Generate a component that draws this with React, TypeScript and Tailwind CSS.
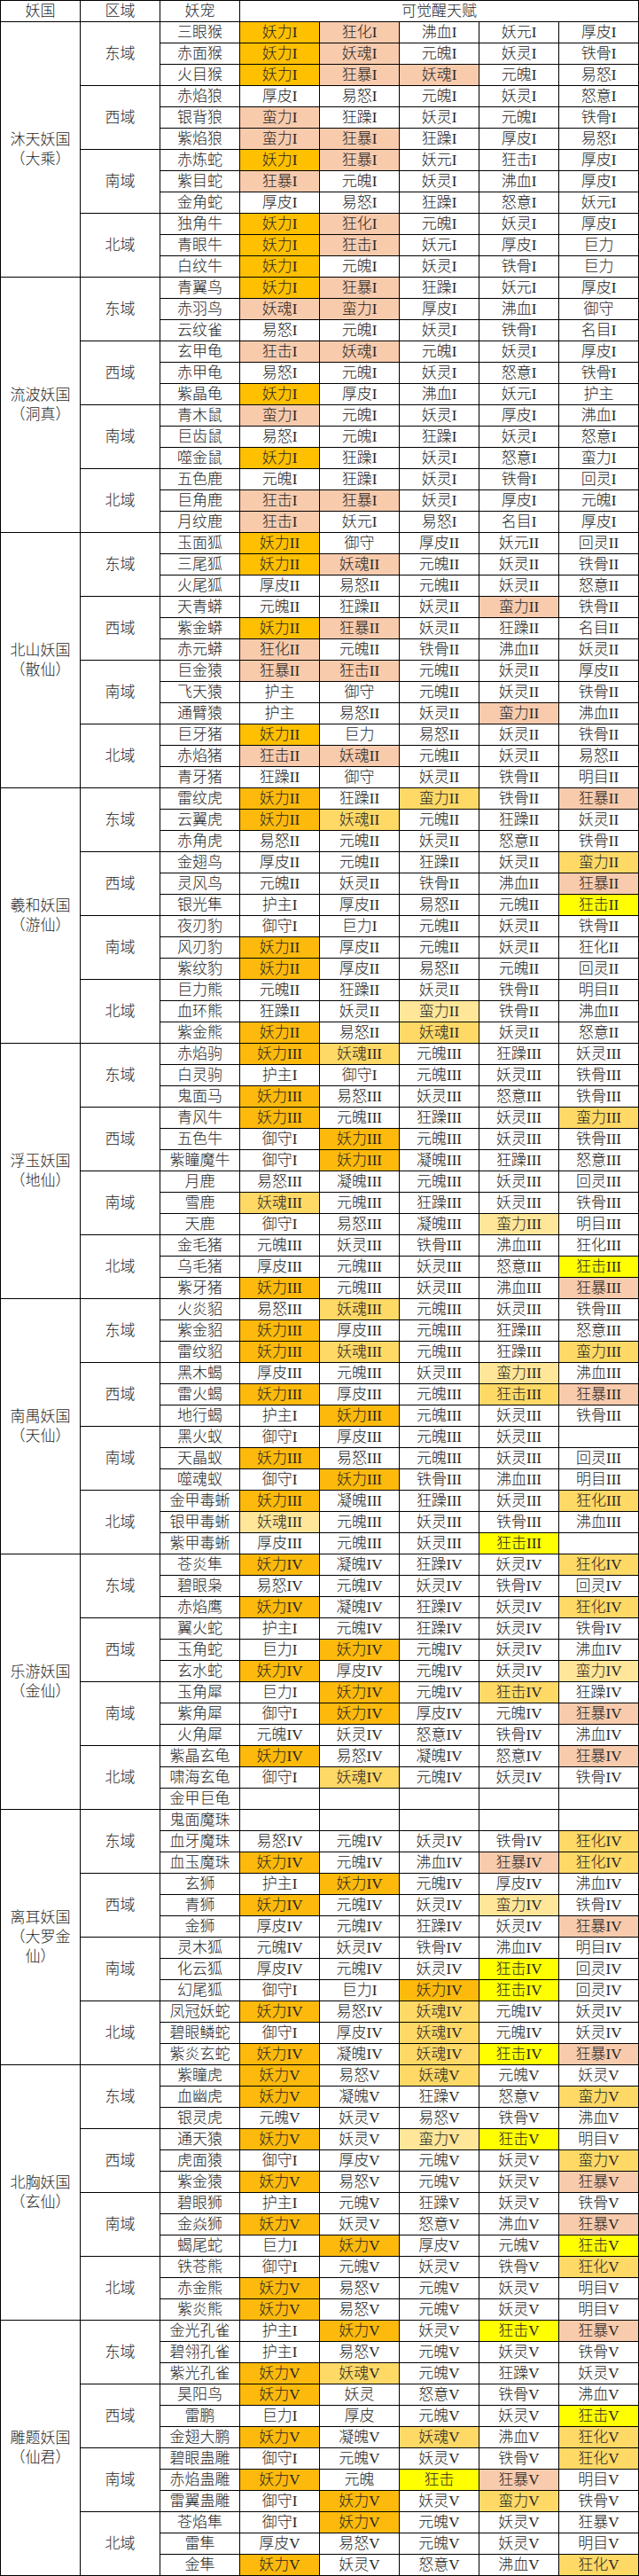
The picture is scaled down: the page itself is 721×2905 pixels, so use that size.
type Region = { name: string; pets: string[] };
type Country = { name: string[]; regions: Region[] };

// 单元格写法: "文字@色号"，"_" 为空格子
const fills: Record<string, string> = {
  g: 'bg-[#FFC000]',
  o: 'bg-[#FDBA0C]',
  l: 'bg-[#FFD966]',
  e: 'bg-[#FFE699]',
  p: 'bg-[#F8CBAD]',
  y: 'bg-[#FFFF00]',
};

const countries: Country[] = [
  {
    name: ['沐天妖国', '（大乘）'],
    regions: [
      { name: '东域', pets: ['三眼猴 妖力I@g 狂化I@p 沸血I 妖元I 厚皮I', '赤面猴 妖力I@g 妖魂I@p 元魄I 妖灵I 铁骨I', '火目猴 妖力I@g 狂暴I@p 妖魂I@p 元魄I 易怒I'] },
      { name: '西域', pets: ['赤焰狼 厚皮I 易怒I 元魄I 妖灵I 怒意I', '银背狼 蛮力I@p 狂躁I 妖灵I 元魄I 铁骨I', '紫焰狼 蛮力I@p 狂暴I@p 狂躁I 厚皮I 易怒I'] },
      { name: '南域', pets: ['赤炼蛇 妖力I@g 狂暴I@p 妖元I 狂击I 厚皮I', '紫目蛇 狂暴I@p 元魄I 妖灵I 沸血I 厚皮I', '金角蛇 厚皮I 易怒I 狂躁I 怒意I 妖元I'] },
      { name: '北域', pets: ['独角牛 妖力I@g 狂化I@p 元魄I 妖灵I 厚皮I', '青眼牛 妖力I@g 狂击I@p 妖元I 厚皮I 巨力', '白纹牛 妖力I@g 元魄I 妖灵I 铁骨I 巨力'] },
    ],
  },
  {
    name: ['流波妖国', '（洞真）'],
    regions: [
      { name: '东域', pets: ['青翼鸟 妖力I@g 狂暴I@p 狂躁I 妖元I 厚皮I', '赤羽鸟 妖魂I@p 蛮力I@p 厚皮I 沸血I 御守', '云纹雀 易怒I 元魄I 妖灵I 铁骨I 名目I'] },
      { name: '西域', pets: ['玄甲龟 狂击I@p 妖魂I@p 元魄I 妖灵I 厚皮I', '赤甲龟 易怒I 元魄I 妖灵I 怒意I 铁骨I', '紫晶龟 妖力I@g 厚皮I 沸血I 妖元I 护主'] },
      { name: '南域', pets: ['青木鼠 蛮力I@p 元魄I 妖灵I 厚皮I 沸血I', '巨齿鼠 易怒I 元魄I 狂躁I 妖灵I 怒意I', '噬金鼠 妖力I@g 狂躁I 妖灵I 怒意I 蛮力I'] },
      { name: '北域', pets: ['五色鹿 元魄I 狂躁I 妖灵I 铁骨I 回灵I', '巨角鹿 狂击I@p 狂暴I@p 妖灵I 厚皮I 元魄I', '月纹鹿 狂击I@p 妖元I 易怒I 名目I 厚皮I'] },
    ],
  },
  {
    name: ['北山妖国', '（散仙）'],
    regions: [
      { name: '东域', pets: ['玉面狐 妖力II@g 御守 厚皮II 妖元II 回灵II', '三尾狐 妖力II@g 妖魂II@p 元魄II 妖灵II 铁骨II', '火尾狐 厚皮II 易怒II 元魄II 妖灵II 怒意II'] },
      { name: '西域', pets: ['天青蟒 元魄II 狂躁II 妖灵II 蛮力II@p 铁骨II', '紫金蟒 妖力II@g 狂暴II@p 妖灵II 狂躁II 名目II', '赤元蟒 狂化II@p 元魄II 铁骨II 沸血II 妖灵II'] },
      { name: '南域', pets: ['巨金猿 狂暴II@p 狂击II@p 元魄II 妖灵II 厚皮II', '飞天猿 护主 御守 元魄II 妖灵II 铁骨II', '通臂猿 护主 易怒II 妖灵II 蛮力II@p 沸血II'] },
      { name: '北域', pets: ['巨牙猪 妖力II@g 巨力 易怒II 妖灵II 铁骨II', '赤焰猪 狂击II@p 妖魂II@p 元魄II 妖灵II 易怒II', '青牙猪 狂躁II 御守 妖灵II 铁骨II 明目II'] },
    ],
  },
  {
    name: ['羲和妖国', '（游仙）'],
    regions: [
      { name: '东域', pets: ['雷纹虎 妖力II@o 狂躁II 蛮力II@l 铁骨II 狂暴II@p', '云翼虎 妖力II@o 妖魂II@l 元魄II 狂躁II 妖灵II', '赤角虎 易怒II 元魄II 妖灵II 怒意II 铁骨II'] },
      { name: '西域', pets: ['金翅鸟 厚皮II 元魄II 狂躁II 妖灵II 蛮力II@l', '灵风鸟 元魄II 妖灵II 铁骨II 沸血II 狂暴II@p', '银光隼 护主I 厚皮II 易怒II 元魄II 狂击II@y'] },
      { name: '南域', pets: ['夜刃豹 御守I 巨力I 元魄II 妖灵II 铁骨II', '风刃豹 妖力II@o 厚皮II 元魄II 妖灵II 狂化II', '紫纹豹 妖力II@o 厚皮II 易怒II 元魄II 回灵II'] },
      { name: '北域', pets: ['巨力熊 元魄II 狂躁II 妖灵II 铁骨II 明目II', '血环熊 狂躁II 妖灵II 蛮力II@e 铁骨II 沸血II', '紫金熊 妖力II@o 易怒II 妖魂II@l 妖灵II 怒意II'] },
    ],
  },
  {
    name: ['浮玉妖国', '（地仙）'],
    regions: [
      { name: '东域', pets: ['赤焰驹 妖力III@o 妖魂III@l 元魄III 狂躁III 妖灵III', '白灵驹 护主I 御守I 元魄III 妖灵III 铁骨III', '鬼面马 妖力III@o 易怒III 妖灵III 怒意III 铁骨III'] },
      { name: '西域', pets: ['青风牛 妖力III@o 元魄III 狂躁III 妖灵III 蛮力III@l', '五色牛 御守I 妖力III@o 元魄III 妖灵III 铁骨III', '紫瞳魔牛 御守I 妖力III@o 凝魄III 狂躁III 怒意III'] },
      { name: '南域', pets: ['月鹿 易怒III 凝魄III 元魄III 妖灵III 回灵III', '雪鹿 妖魂III@l 元魄III 狂躁III 妖灵III 铁骨III', '天鹿 御守I 易怒III 凝魄III 蛮力III@e 明目III'] },
      { name: '北域', pets: ['金毛猪 元魄III 妖灵III 铁骨III 沸血III 狂化III', '乌毛猪 厚皮III 元魄III 妖灵III 怒意III 狂击III@y', '紫牙猪 妖力III@o 元魄III 妖灵III 沸血III 狂暴III@p'] },
    ],
  },
  {
    name: ['南禺妖国', '（天仙）'],
    regions: [
      { name: '东域', pets: ['火炎貂 易怒III 妖魂III@l 元魄III 妖灵III 铁骨III', '紫金貂 妖力III@o 厚皮III 元魄III 狂躁III 怒意III', '雷纹貂 妖力III@o 妖魂III@l 元魄III 狂躁III 蛮力III@l'] },
      { name: '西域', pets: ['黑木蝎 厚皮III 元魄III 妖灵III 蛮力III@e 沸血III', '雷火蝎 妖力III@o 厚皮III 元魄III 狂击III@l 狂暴III@p', '地行蝎 护主I 妖力III@o 元魄III 妖灵III 铁骨III'] },
      { name: '南域', pets: ['黑火蚁 御守I 厚皮III 元魄III 妖灵III _', '天晶蚁 妖力III@o 易怒III 元魄III 妖灵III 回灵III', '噬魂蚁 御守I 妖力III@o 铁骨III 沸血III 明目III'] },
      { name: '北域', pets: ['金甲毒蜥 妖力III@o 凝魄III 狂躁III 妖灵III 狂化III@l', '银甲毒蜥 妖魂III@e 元魄III 妖灵III 铁骨III 沸血III', '紫甲毒蜥 厚皮III 元魄III 妖灵III 狂击III@y _'] },
    ],
  },
  {
    name: ['乐游妖国', '（金仙）'],
    regions: [
      { name: '东域', pets: ['苍炎隼 妖力IV@o 凝魄IV 狂躁IV 妖灵IV 狂化IV@l', '碧眼枭 易怒IV 元魄IV 妖灵IV 铁骨IV 回灵IV', '赤焰鹰 妖力IV@o 凝魄IV 狂躁IV 妖灵IV 狂化IV@l'] },
      { name: '西域', pets: ['翼火蛇 护主I 元魄IV 狂躁IV 妖灵IV 铁骨IV', '玉角蛇 巨力I 妖力IV@o 元魄IV 妖灵IV 沸血IV', '玄水蛇 妖力IV@o 厚皮IV 元魄IV 妖灵IV 蛮力IV@e'] },
      { name: '南域', pets: ['玉角犀 巨力I 妖力IV@o 元魄IV 狂击IV@l 狂躁IV', '紫角犀 御守I 妖力IV@o 厚皮IV 元魄IV 狂暴IV@p', '火角犀 元魄IV 妖灵IV 怒意IV 铁骨IV 沸血IV'] },
      { name: '北域', pets: ['紫晶玄龟 妖力IV@o 易怒IV 凝魄IV 怒意IV 狂暴IV@p', '啸海玄龟 御守I 妖魂IV@l 元魄IV 妖灵IV 铁骨IV', '金甲巨龟 _ _ _ _ _'] },
    ],
  },
  {
    name: ['离耳妖国', '（大罗金', '仙）'],
    regions: [
      { name: '东域', pets: ['鬼面魔珠 _ _ _ _ _', '血牙魔珠 易怒IV 元魄IV 妖灵IV 铁骨IV 狂化IV@l', '血玉魔珠 妖力IV@o 元魄IV 沸血IV 狂暴IV@p 狂化IV@l'] },
      { name: '西域', pets: ['玄狮 护主I 妖力IV@o 元魄IV 厚皮IV 沸血IV', '青狮 妖力IV@o 元魄IV 妖灵IV 蛮力IV@e 铁骨IV', '金狮 厚皮IV 元魄IV 狂躁IV 妖灵IV 狂暴IV@p'] },
      { name: '南域', pets: ['灵木狐 元魄IV 妖灵IV 铁骨IV 沸血IV 明目IV', '化云狐 厚皮IV 元魄IV 妖灵IV 狂击IV@y 回灵IV', '幻尾狐 御守I 巨力I 妖力IV@o 狂击IV@y 回灵IV'] },
      { name: '北域', pets: ['凤冠妖蛇 妖力IV@o 易怒IV 妖魂IV@l 元魄IV 妖灵IV', '碧眼鳞蛇 御守I 厚皮IV 妖魂IV@l 元魄IV 妖灵IV', '紫炎玄蛇 妖力IV@o 凝魄IV 妖魂IV@l 狂击IV@y 狂暴IV@p'] },
    ],
  },
  {
    name: ['北胸妖国', '（玄仙）'],
    regions: [
      { name: '东域', pets: ['紫瞳虎 妖力V@o 易怒V 妖魂V@l 元魄V 妖灵V', '血幽虎 妖力V@o 凝魄V 狂躁V 怒意V 蛮力V@l', '银灵虎 元魄V 妖灵V 易怒V 铁骨V 沸血V'] },
      { name: '西域', pets: ['通天猿 妖力V@o 妖灵V 蛮力V@e 狂击V@y 明目V', '虎面猿 御守I 厚皮V 元魄V 妖灵V 蛮力V@l', '紫金猿 妖力V@o 易怒V 元魄V 妖灵V 狂暴V@p'] },
      { name: '南域', pets: ['碧眼狮 护主I 元魄V 狂躁V 妖灵V 铁骨V', '金焱狮 妖力V@o 妖灵V 怒意V 沸血V 狂暴V@p', '蝎尾蛇 巨力I 妖力V@o 厚皮V 元魄V 狂击V@y'] },
      { name: '北域', pets: ['铁苍熊 御守I 元魄V 妖灵V 铁骨V 狂化V@l', '赤金熊 妖力V@o 易怒V 元魄V 妖灵V 明目V', '紫炎熊 妖力V@o 易怒V 元魄V 妖灵V 明目V'] },
    ],
  },
  {
    name: ['雕题妖国', '（仙君）'],
    regions: [
      { name: '东域', pets: ['金光孔雀 护主I 妖力V@o 妖灵V 狂击V@y 狂暴V@p', '碧翎孔雀 护主I 易怒V 元魄V 妖灵V 铁骨V', '紫光孔雀 妖力V@o 妖魂V@l 元魄V 狂躁V 妖灵V'] },
      { name: '西域', pets: ['昊阳鸟 妖力V@o 妖灵 怒意V 铁骨V 沸血V', '雷鹏 巨力I 厚皮 元魄V 妖灵V 狂击V@y', '金翅大鹏 妖力V@o 凝魄V 妖魂V@l 沸血V 狂化V@l'] },
      { name: '南域', pets: ['碧眼蛊雕 御守I 元魄V 妖灵V 铁骨V 狂化V@l', '赤焰蛊雕 妖力V@o 元魄 狂击@y 狂暴V@p 明目V', '雷翼蛊雕 御守I 妖力V@o 妖灵V 蛮力V@l 铁骨V'] },
      { name: '北域', pets: ['苍焰隼 御守I 妖力V@o 元魄V 妖灵V 狂暴V', '雷隼 厚皮V 易怒V 元魄V 妖灵V 明目V', '金隼 妖力V@o 妖灵V 怒意V 沸血V 狂化V@l'] },
    ],
  },
];

const cell = 'border border-black h-6 p-0 text-center align-middle leading-[22px] whitespace-nowrap overflow-hidden';

function Talent({ raw }: { raw: string }) {
  if (raw === '_') return <td className={cell} />;
  const [text, code] = raw.split('@');
  return <td className={`${cell} ${code ? fills[code] : ''}`}>{text}</td>;
}

export default function App() {
  return (
    <div className="bg-white w-[721px] text-[17px] text-[#262626] font-['Liberation_Serif','Noto_Sans_CJK_SC',serif] font-light">
      <table className="w-[721px] table-fixed border-collapse">
        <thead>
          <tr>
            <th className={`${cell} font-light`}>妖国</th>
            <th className={`${cell} font-light`}>区域</th>
            <th className={`${cell} font-light`}>妖宠</th>
            <th colSpan={5} className={`${cell} font-light`}>可觉醒天赋</th>
          </tr>
        </thead>
        <tbody>
          {countries.map((c) => {
            const total = c.regions.reduce((n, r) => n + r.pets.length, 0);
            return c.regions.map((r, ri) =>
              r.pets.map((line, pi) => {
                const [pet, ...talents] = line.split(' ');
                return (
                  <tr key={pet} className="h-6">
                    {ri === 0 && pi === 0 && (
                      <td rowSpan={total} className="border border-black p-0 text-center align-middle leading-[22px]">
                        {c.name.map((part) => (
                          <div key={part}>{part}</div>
                        ))}
                      </td>
                    )}
                    {pi === 0 && (
                      <td rowSpan={r.pets.length} className="border border-black p-0 text-center align-middle">
                        {r.name}
                      </td>
                    )}
                    <td className={cell}>{pet}</td>
                    {talents.map((t, ti) => (
                      <Talent key={ti} raw={t} />
                    ))}
                  </tr>
                );
              })
            );
          })}
        </tbody>
      </table>
    </div>
  );
}
